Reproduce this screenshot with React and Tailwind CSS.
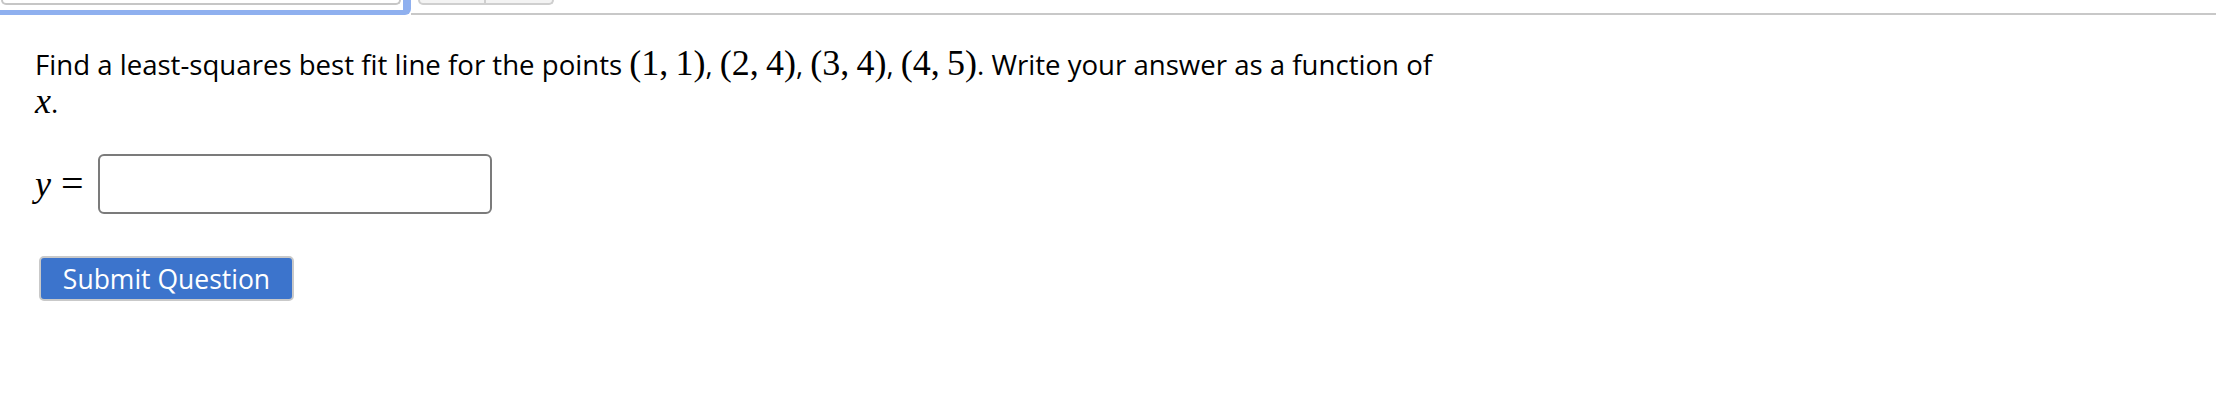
export default function App() {
  const math = "font-['Liberation_Serif',serif] text-[36px] leading-[0]";
  return (
    <div className="w-[2216px] h-[402px] bg-white overflow-hidden text-black [font-variant-ligatures:none]">
      <div className="flex h-[15px]">
        <div className="w-[411px] h-[15px] border-r-[8px] border-b-[5px] border-[#8fb0ef] rounded-br-[6px] pr-[2px]">
          <div className="h-[5px] ml-[1px] border-x-2 border-b-2 border-[#c6c6c6] rounded-b-[8px]" />
        </div>
        <div className="flex-1 h-[15px] border-b-2 border-[#c8c8c8] pl-[7px]">
          <div className="w-[136px] h-[5px] flex border-x-2 border-b-2 border-[#cfcfcf] rounded-b-[8px] bg-[#f3f3f3]">
            <div className="w-[66px] border-r-2 border-[#cfcfcf]" />
          </div>
        </div>
      </div>

      <div className="pl-[35px] pt-[30px] font-['Open_Sans',sans-serif] text-[27.6px] leading-[38px]">
        <p className="whitespace-nowrap">
          Find a least-squares best fit line for the points{" "}
          <span className={math}>(1,&#8201;1)</span>,{" "}
          <span className={math}>(2,&#8201;4)</span>,{" "}
          <span className={math}>(3,&#8201;4)</span>,{" "}
          <span className={math}>(4,&#8201;5)</span>. Write your answer as a function of
          <br />
          <span className={math + " italic"}>x</span>.
        </p>
        <div className="flex items-center mt-[33px]">
          <span className="font-['Liberation_Serif',serif] italic text-[36px] w-[26px]">y</span>
          <span className="font-['Liberation_Serif',serif] text-[40px]">=</span>
          <input className="ml-[14px] w-[394px] h-[60px] border-2 border-[#7b7b7b] rounded-[6px] outline-none" />
        </div>
        <button className="mt-[42px] ml-[4px] w-[255px] h-[45px] bg-[#3c74cc] border-2 border-[#c9c9c9] rounded-[5px] text-white text-[26.5px] leading-[40px] font-['Open_Sans',sans-serif]">
          Submit Question
        </button>
      </div>
    </div>
  );
}
